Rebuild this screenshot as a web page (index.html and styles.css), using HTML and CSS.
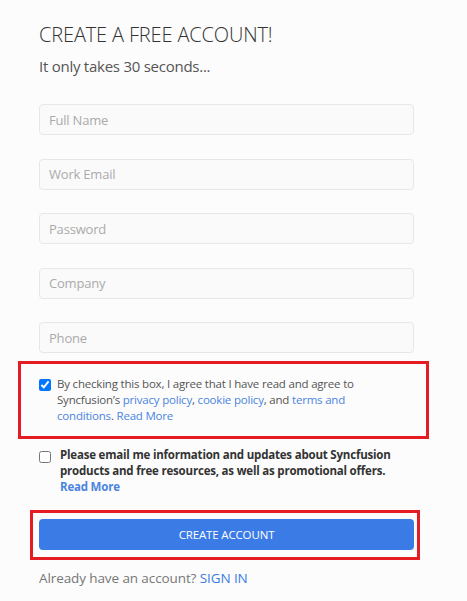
FILE: index.html
```html
<!DOCTYPE html>
<html lang="en">
<head>
<meta charset="utf-8">
<title>Create a free account</title>
<link rel="stylesheet" href="styles.css">
</head>
<body>
<div class="page">
  <h1 class="title">CREATE A FREE ACCOUNT!</h1>
  <p class="subtitle">It only takes 30 seconds...</p>
  <form class="form">
    <input class="field" type="text" placeholder="Full Name">
    <input class="field" type="email" placeholder="Work Email">
    <input class="field" type="password" placeholder="Password">
    <input class="field" type="text" placeholder="Company">
    <input class="field" type="tel" placeholder="Phone">
    <div class="highlight consent">
      <label class="check-row">
        <input type="checkbox" class="box" checked>
        <span class="consent-text">By checking this box, I agree that I have read and agree to Syncfusion’s <a href="#">privacy policy</a>, <a href="#">cookie policy</a>, and <a href="#">terms and conditions</a>. <a href="#">Read More</a></span>
      </label>
    </div>
    <label class="check-row marketing">
      <input type="checkbox" class="box">
      <span class="marketing-text">Please email me information and updates about Syncfusion products and free resources, as well as promotional offers. <a href="#">Read More</a></span>
    </label>
    <div class="highlight submit-wrap">
      <button type="button" class="submit">CREATE ACCOUNT</button>
    </div>
    <p class="signin">Already have an account? <a href="#">SIGN IN</a></p>
  </form>
</div>
</body>
</html>
```

FILE: styles.css
```css
* { box-sizing: border-box; }
html, body {
  margin: 0;
  padding: 0;
  background: #fcfcfc;
  font-family: "Open Sans", "Noto Sans", sans-serif;
}
.page {
  padding: 21px 0 0 39px;
  width: 414px;
}
.title {
  margin: 0;
  font-size: 20px;
  line-height: 28px;
  font-weight: 300;
  letter-spacing: -0.15px;
  color: #333;
}
.subtitle {
  margin: 6px 0 0;
  font-size: 15px;
  line-height: 22px;
  letter-spacing: -0.25px;
  color: #555;
}
.form {
  display: flex;
  flex-direction: column;
  margin-top: 27px;
  width: 375px;
}
.field {
  height: 31px;
  margin: 0 0 23.5px;
  padding: 0 9px;
  border: 1px solid #e7e7e7;
  border-radius: 4px;
  background: #fafafa;
  font-family: inherit;
  font-size: 13px;
  letter-spacing: -0.2px;
  color: #333;
  outline: none;
}
.field:last-of-type { margin-bottom: 0; }
.field::placeholder { color: #aaa; }
.highlight {
  border: 3px solid #e61c25;
}
.consent {
  margin: 8px -15px 0 -21px;
  padding: 12px 12px 12px 18px;
}
.check-row {
  display: flex;
  align-items: flex-start;
  font-size: 11.5px;
  line-height: 16px;
  letter-spacing: -0.2px;
}
.box {
  flex: none;
  width: 12px;
  height: 12px;
  margin: 3px 0 0;
}
.consent-text {
  max-width: 340px;
  margin-left: 6px;
  color: #555;
}
.check-row a {
  color: #4a84e0;
  text-decoration: none;
}
.marketing {
  margin-top: 8px;
}
.marketing .box { margin-top: 4px; }
.marketing-text {
  margin-left: 9px;
  font-weight: 700;
  color: #333;
}
.submit-wrap {
  margin: 15px -6px 0 -9px;
  padding: 6px 3px 7px 6px;
}
.submit {
  display: block;
  width: 100%;
  height: 31px;
  border: 0;
  border-radius: 4px;
  background: #3b7be6;
  color: #fff;
  font-family: inherit;
  font-size: 11.5px;
  letter-spacing: -0.15px;
  cursor: pointer;
}
.signin {
  margin: 8px 0 0;
  font-size: 13.5px;
  line-height: 20px;
  letter-spacing: -0.1px;
  color: #777;
}
.signin a {
  color: #3b7be6;
  text-decoration: none;
}
```
